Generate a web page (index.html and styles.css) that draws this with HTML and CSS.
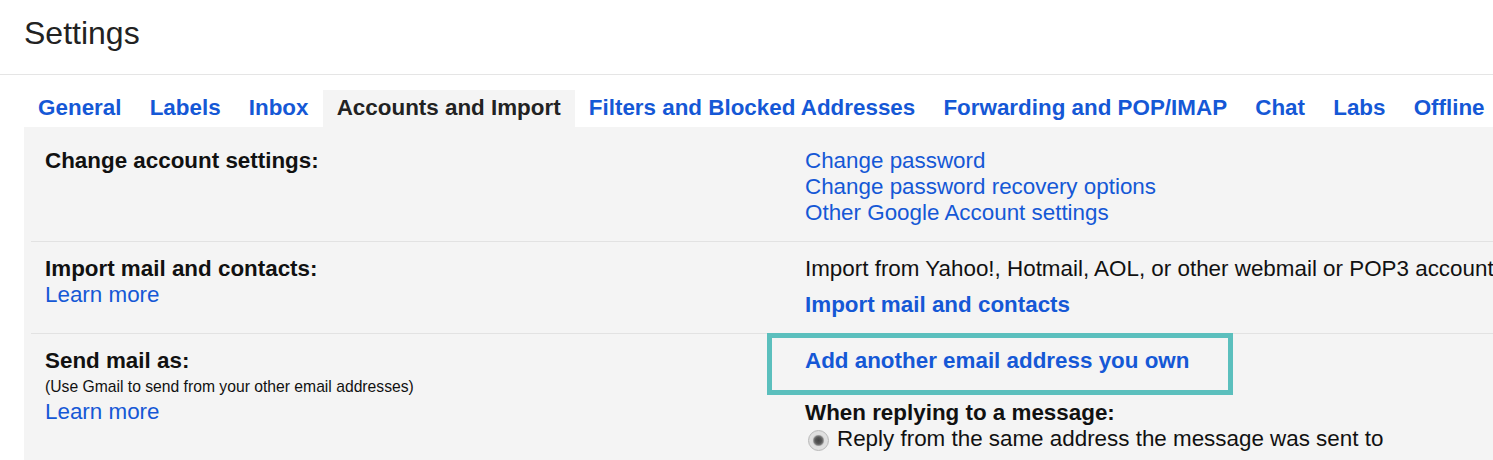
FILE: index.html
```html
<!DOCTYPE html>
<html lang="en">
<head>
<meta charset="utf-8">
<title>Settings</title>
<link rel="stylesheet" href="styles.css">
</head>
<body>
<header class="header">
  <h1 class="title">Settings</h1>
</header>
<nav class="tabs">
  <a class="tab">General</a>
  <a class="tab">Labels</a>
  <a class="tab">Inbox</a>
  <a class="tab tab-active">Accounts and Import</a>
  <a class="tab">Filters and Blocked Addresses</a>
  <a class="tab">Forwarding and POP/IMAP</a>
  <a class="tab">Chat</a>
  <a class="tab">Labs</a>
  <a class="tab">Offline</a>
  <a class="tab">Themes</a>
</nav>
<main class="panel">
  <section class="row">
    <div class="label">
      <div class="label-title">Change account settings:</div>
    </div>
    <div class="value">
      <a class="link">Change password</a>
      <a class="link">Change password recovery options</a>
      <a class="link">Other Google Account settings</a>
    </div>
  </section>
  <section class="row row-divided">
    <div class="label">
      <div class="label-title">Import mail and contacts:</div>
      <a class="link">Learn more</a>
    </div>
    <div class="value">
      <div class="text">Import from Yahoo!, Hotmail, AOL, or other webmail or POP3 accounts.</div>
      <a class="link link-bold link-spaced">Import mail and contacts</a>
    </div>
  </section>
  <section class="row row-divided">
    <div class="label">
      <div class="label-title">Send mail as:</div>
      <div class="note">(Use Gmail to send from your other email addresses)</div>
      <a class="link">Learn more</a>
    </div>
    <div class="value">
      <div><span class="highlight"><a class="link link-bold">Add another email address you own</a></span></div>
      <div class="label-title subhead">When replying to a message:</div>
      <label class="radio-line"><span class="radio"></span>Reply from the same address the message was sent to</label>
    </div>
  </section>
</main>
</body>
</html>
```

FILE: styles.css
```css
html, body {
  margin: 0;
  padding: 0;
  background: #ffffff;
  overflow: hidden;
}
body {
  font-family: "Liberation Sans", Arial, sans-serif;
  color: #222222;
  width: 1493px;
  height: 460px;
}
.header {
  padding: 15px 0 0 24px;
  height: 59px;
  border-bottom: 1px solid #e5e5e5;
}
.title {
  margin: 0;
  font-size: 32px;
  font-weight: normal;
  line-height: 37px;
  color: #222222;
}
.tabs {
  display: flex;
  margin-top: 15px;
  padding-left: 24px;
  white-space: nowrap;
}
.tab {
  display: block;
  padding: 0 14.1px;
  height: 37px;
  line-height: 35px;
  font-size: 22.4px;
  font-weight: bold;
  color: #1558d6;
  flex: none;
}
.tab-active {
  background: #f4f4f4;
  color: #222222;
}
.panel {
  margin-left: 24px;
  width: 1600px;
  background: #f4f4f4;
  padding-top: 7px;
  padding-bottom: 40px;
  white-space: nowrap;
}
.row {
  display: grid;
  grid-template-columns: 760px 1fr;
  margin-left: 7px;
  padding: 14px 0 15px 14px;
  font-size: 22.4px;
  line-height: 26px;
}
.row-divided {
  border-top: 1px solid #e2e2e2;
}
.label, .value {
  display: flex;
  flex-direction: column;
  align-items: flex-start;
}
.label-title {
  font-weight: bold;
  color: #111111;
}
.link {
  color: #1558d6;
  display: inline-block;
}
.link-bold {
  font-weight: bold;
}
.link-spaced {
  margin-top: 10px;
}
.text {
  color: #111111;
}
.note {
  font-size: 15.7px;
  line-height: 25px;
  color: #111111;
}
.highlight {
  position: relative;
  display: inline-block;
}
.highlight::after {
  content: "";
  position: absolute;
  left: -38px;
  right: -44px;
  top: -15px;
  bottom: -21px;
  border: 5px solid #5bbfbd;
}
.subhead {
  margin-top: 26px;
}
.radio-line {
  display: flex;
  align-items: center;
  color: #111111;
}
.radio {
  display: inline-block;
  width: 19px;
  height: 19px;
  margin: 2px 8px 0 3px;
  border-radius: 50%;
  border: 1px solid #b8b8b8;
  background: radial-gradient(circle at 50% 50%, #444 0, #555 3px, #777 4.5px, #dcdcdc 6px, #f2f2f2 100%);
  box-shadow: inset 0 0 2px #cfcfcf;
}
```
